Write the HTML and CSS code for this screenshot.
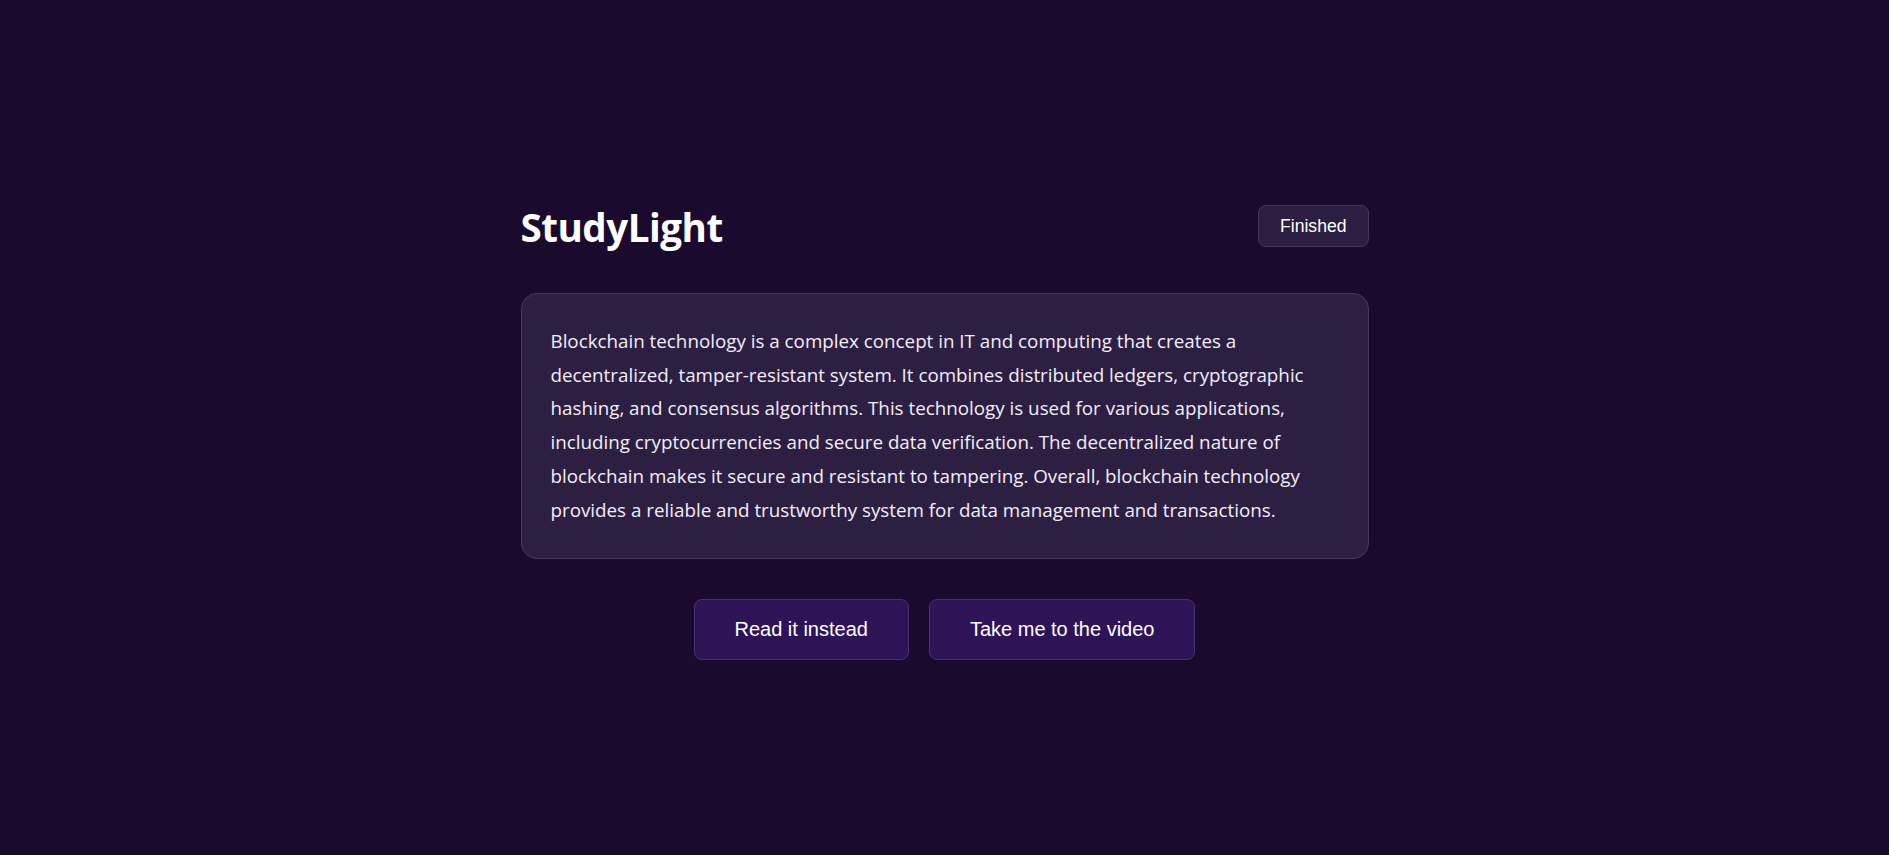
FILE: index.html
```html
<!DOCTYPE html>
<html lang="en">
<head>
<meta charset="utf-8">
<title>StudyLight</title>
<link rel="stylesheet" href="styles.css">
</head>
<body>
<main class="page">
  <div class="container">
    <header class="header">
      <h1 class="title">StudyLight</h1>
      <span class="badge">Finished</span>
    </header>
    <section class="card">
      <p class="summary">Blockchain technology is a complex concept in IT and computing that creates a decentralized, tamper-resistant system. It combines distributed ledgers, cryptographic hashing, and consensus algorithms. This technology is used for various applications, including cryptocurrencies and secure data verification. The decentralized nature of blockchain makes it secure and resistant to tampering. Overall, blockchain technology provides a reliable and trustworthy system for data management and transactions.</p>
    </section>
    <div class="actions">
      <button class="btn" type="button">Read it instead</button>
      <button class="btn" type="button">Take me to the video</button>
    </div>
  </div>
</main>
</body>
</html>
```

FILE: styles.css
```css
html, body {
  margin: 0;
  padding: 0;
  background: #1a0b2e;
}

body {
  font-family: "Open Sans", "Noto Sans", sans-serif;
  color: #f3eef8;
}

.page {
  min-height: 100vh;
  display: flex;
  justify-content: center;
  align-items: flex-start;
  padding-top: 200px;
  box-sizing: border-box;
}

.container {
  width: 848px;
}

.header {
  display: flex;
  justify-content: space-between;
  align-items: center;
  margin-bottom: 42px;
}

.title {
  margin: 0;
  padding-top: 4px;
  font-size: 38.6px;
  font-weight: 700;
  color: #ffffff;
  line-height: 47px;
  letter-spacing: -0.5px;
}

.badge {
  font-family: "Liberation Sans", Arial, sans-serif;
  font-size: 17.6px;
  line-height: 20px;
  padding: 10px 21px;
  border: 1px solid #463859;
  border-radius: 8px;
  background: #2c1e40;
  color: #ffffff;
}

.card {
  background: #2d1f42;
  border: 1px solid #463a5c;
  border-radius: 16px;
  padding: 31px 29px;
}

.summary {
  margin: 0;
  font-size: 18.8px;
  line-height: 33.7px;
  color: #f3eef8;
}

.actions {
  display: flex;
  justify-content: center;
  gap: 20px;
  margin-top: 40px;
}

.btn {
  font-family: "Liberation Sans", Arial, sans-serif;
  font-size: 20px;
  line-height: 23px;
  padding: 18px 40px;
  background: #2e1456;
  color: #ffffff;
  border: 1px solid #4a3272;
  border-radius: 8px;
  cursor: pointer;
}
```
